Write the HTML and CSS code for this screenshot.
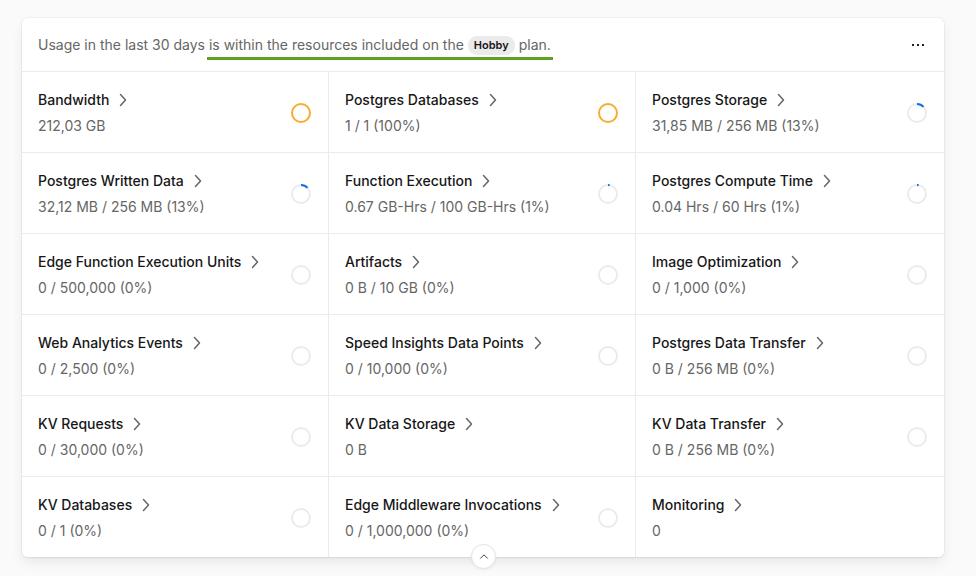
FILE: index.html
```html
<!DOCTYPE html>
<html>
<head>
<meta charset="utf-8">
<link rel="stylesheet" href="styles.css">
</head>
<body>
<div class="card">
  <div class="head">
    <p class="summary">Usage in the last 30 days <span class="hl">is within the resources included on the <span class="badge">Hobby</span> plan.</span></p>
    <svg class="more" viewBox="0 0 14 4"><rect x="1" y="1" width="2" height="2"/><rect x="6" y="1" width="2" height="2"/><rect x="11" y="1" width="2" height="2"/></svg>
  </div>
  <div class="grid">
    <div class="cell"><div class="info"><div class="title">Bandwidth <svg class="chev" viewBox="0 0 8 14"><path d="M1.5 1.5 6.5 7l-5 5.5"/></svg></div><div class="val">212,03 GB</div></div><svg class="ring" viewBox="0 0 22 22"><circle cx="11" cy="11" r="9" class="full"/></svg></div>
    <div class="cell"><div class="info"><div class="title">Postgres Databases <svg class="chev" viewBox="0 0 8 14"><path d="M1.5 1.5 6.5 7l-5 5.5"/></svg></div><div class="val">1 / 1 (100%)</div></div><svg class="ring" viewBox="0 0 22 22"><circle cx="11" cy="11" r="9" class="full"/></svg></div>
    <div class="cell"><div class="info"><div class="title">Postgres Storage <svg class="chev" viewBox="0 0 8 14"><path d="M1.5 1.5 6.5 7l-5 5.5"/></svg></div><div class="val">31,85 MB / 256 MB (13%)</div></div><svg class="ring" viewBox="0 0 22 22"><circle cx="11" cy="11" r="9" class="track"/><circle cx="11" cy="11" r="9" class="prog" pathLength="100" stroke-dasharray="13 100" transform="rotate(-90 11 11)"/></svg></div>

    <div class="cell"><div class="info"><div class="title">Postgres Written Data <svg class="chev" viewBox="0 0 8 14"><path d="M1.5 1.5 6.5 7l-5 5.5"/></svg></div><div class="val">32,12 MB / 256 MB (13%)</div></div><svg class="ring" viewBox="0 0 22 22"><circle cx="11" cy="11" r="9" class="track"/><circle cx="11" cy="11" r="9" class="prog" pathLength="100" stroke-dasharray="13 100" transform="rotate(-90 11 11)"/></svg></div>
    <div class="cell"><div class="info"><div class="title">Function Execution <svg class="chev" viewBox="0 0 8 14"><path d="M1.5 1.5 6.5 7l-5 5.5"/></svg></div><div class="val">0.67 GB-Hrs / 100 GB-Hrs (1%)</div></div><svg class="ring" viewBox="0 0 22 22"><circle cx="11" cy="11" r="9" class="track"/><circle cx="11" cy="11" r="9" class="prog" pathLength="100" stroke-dasharray="3 100" transform="rotate(-90 11 11)"/></svg></div>
    <div class="cell"><div class="info"><div class="title">Postgres Compute Time <svg class="chev" viewBox="0 0 8 14"><path d="M1.5 1.5 6.5 7l-5 5.5"/></svg></div><div class="val">0.04 Hrs / 60 Hrs (1%)</div></div><svg class="ring" viewBox="0 0 22 22"><circle cx="11" cy="11" r="9" class="track"/><circle cx="11" cy="11" r="9" class="prog" pathLength="100" stroke-dasharray="3 100" transform="rotate(-90 11 11)"/></svg></div>

    <div class="cell"><div class="info"><div class="title">Edge Function Execution Units <svg class="chev" viewBox="0 0 8 14"><path d="M1.5 1.5 6.5 7l-5 5.5"/></svg></div><div class="val">0 / 500,000 (0%)</div></div><svg class="ring" viewBox="0 0 22 22"><circle cx="11" cy="11" r="9" class="track"/></svg></div>
    <div class="cell"><div class="info"><div class="title">Artifacts <svg class="chev" viewBox="0 0 8 14"><path d="M1.5 1.5 6.5 7l-5 5.5"/></svg></div><div class="val">0 B / 10 GB (0%)</div></div><svg class="ring" viewBox="0 0 22 22"><circle cx="11" cy="11" r="9" class="track"/></svg></div>
    <div class="cell"><div class="info"><div class="title">Image Optimization <svg class="chev" viewBox="0 0 8 14"><path d="M1.5 1.5 6.5 7l-5 5.5"/></svg></div><div class="val">0 / 1,000 (0%)</div></div><svg class="ring" viewBox="0 0 22 22"><circle cx="11" cy="11" r="9" class="track"/></svg></div>

    <div class="cell"><div class="info"><div class="title">Web Analytics Events <svg class="chev" viewBox="0 0 8 14"><path d="M1.5 1.5 6.5 7l-5 5.5"/></svg></div><div class="val">0 / 2,500 (0%)</div></div><svg class="ring" viewBox="0 0 22 22"><circle cx="11" cy="11" r="9" class="track"/></svg></div>
    <div class="cell"><div class="info"><div class="title">Speed Insights Data Points <svg class="chev" viewBox="0 0 8 14"><path d="M1.5 1.5 6.5 7l-5 5.5"/></svg></div><div class="val">0 / 10,000 (0%)</div></div><svg class="ring" viewBox="0 0 22 22"><circle cx="11" cy="11" r="9" class="track"/></svg></div>
    <div class="cell"><div class="info"><div class="title">Postgres Data Transfer <svg class="chev" viewBox="0 0 8 14"><path d="M1.5 1.5 6.5 7l-5 5.5"/></svg></div><div class="val">0 B / 256 MB (0%)</div></div><svg class="ring" viewBox="0 0 22 22"><circle cx="11" cy="11" r="9" class="track"/></svg></div>

    <div class="cell"><div class="info"><div class="title">KV Requests <svg class="chev" viewBox="0 0 8 14"><path d="M1.5 1.5 6.5 7l-5 5.5"/></svg></div><div class="val">0 / 30,000 (0%)</div></div><svg class="ring" viewBox="0 0 22 22"><circle cx="11" cy="11" r="9" class="track"/></svg></div>
    <div class="cell"><div class="info"><div class="title">KV Data Storage <svg class="chev" viewBox="0 0 8 14"><path d="M1.5 1.5 6.5 7l-5 5.5"/></svg></div><div class="val">0 B</div></div></div>
    <div class="cell"><div class="info"><div class="title">KV Data Transfer <svg class="chev" viewBox="0 0 8 14"><path d="M1.5 1.5 6.5 7l-5 5.5"/></svg></div><div class="val">0 B / 256 MB (0%)</div></div><svg class="ring" viewBox="0 0 22 22"><circle cx="11" cy="11" r="9" class="track"/></svg></div>

    <div class="cell"><div class="info"><div class="title">KV Databases <svg class="chev" viewBox="0 0 8 14"><path d="M1.5 1.5 6.5 7l-5 5.5"/></svg></div><div class="val">0 / 1 (0%)</div></div><svg class="ring" viewBox="0 0 22 22"><circle cx="11" cy="11" r="9" class="track"/></svg></div>
    <div class="cell"><div class="info"><div class="title">Edge Middleware Invocations <svg class="chev" viewBox="0 0 8 14"><path d="M1.5 1.5 6.5 7l-5 5.5"/></svg></div><div class="val">0 / 1,000,000 (0%)</div></div><svg class="ring" viewBox="0 0 22 22"><circle cx="11" cy="11" r="9" class="track"/></svg></div>
    <div class="cell"><div class="info"><div class="title">Monitoring <svg class="chev" viewBox="0 0 8 14"><path d="M1.5 1.5 6.5 7l-5 5.5"/></svg></div><div class="val">0</div></div></div>
  </div>
  <div class="collapse"><svg viewBox="0 0 12 8"><path d="M1.5 6.5 6 2l4.5 4.5"/></svg></div>
</div>
</body>
</html>
```

FILE: styles.css
```css
* { box-sizing: border-box; }
html, body { margin: 0; background: #fafafa; }
body {
  padding: 18px 32px 0 22px;
  font-family: Inter, "Noto Sans", sans-serif;
  -webkit-font-smoothing: antialiased;
  min-height: 576px;
}
.card {
  position: relative;
  width: 922px;
  background: #fff;
  border-radius: 6px;
  box-shadow: 0 0 0 1px rgba(0,0,0,0.03), 0 1px 2px rgba(0,0,0,0.05), 0 6px 14px -2px rgba(0,0,0,0.09);
}
.head {
  height: 54px;
  display: flex;
  align-items: center;
  justify-content: space-between;
  padding: 0 16px;
  border-bottom: 1px solid #ebebeb;
}
.summary {
  margin: 0;
  font-size: 14px;
  color: #666;
  line-height: 20px;
}
.hl {
  border-bottom: 3px solid #5ea11f;
  padding: 0 2px 4px 2px;
  margin-left: -2px;
}
.badge {
  display: inline-block;
  background: #ebebeb;
  color: #171717;
  font-size: 11px;
  font-weight: 600;
  line-height: 19px;
  padding: 0 6px;
  border-radius: 9px;
  vertical-align: 1px;
}
.more {
  width: 14px;
  height: 4px;
  margin-right: 3px;
  fill: #222;
}
.grid {
  display: grid;
  grid-template-columns: 306px 306px 308px;
  gap: 1px;
  background: #ebebeb;
  border-radius: 0 0 6px 6px;
  overflow: hidden;
}
.cell {
  background: #fff;
  height: 80px;
  display: flex;
  align-items: center;
  justify-content: space-between;
  padding: 1px 16px 0 16px;
}
.info {
  display: flex;
  flex-direction: column;
  gap: 6px;
}
.title {
  display: flex;
  align-items: center;
  font-size: 14px;
  font-weight: 500;
  color: #171717;
  line-height: 20px;
}
.chev {
  width: 8px;
  height: 14px;
  margin-left: 10px;
  fill: none;
  stroke: #666;
  stroke-width: 1.5;
  stroke-linecap: round;
  stroke-linejoin: round;
}
.val {
  font-size: 14px;
  color: #666;
  line-height: 20px;
}
.ring {
  width: 22px;
  height: 22px;
  fill: none;
  stroke-width: 2;
}
.ring .full { stroke: #f5ad2a; }
.ring .track { stroke: #ebebeb; }
.ring .prog { stroke: #0a72ef; }
.collapse {
  position: absolute;
  z-index: 2;
  left: 449px;
  top: 526px;
  width: 25px;
  height: 25px;
  border-radius: 50%;
  border: 1px solid #e3e3e3;
  background: #fff;
  display: flex;
  align-items: center;
  justify-content: center;
  box-shadow: 0 1px 3px rgba(0,0,0,0.06);
}
.collapse svg {
  width: 10px;
  height: 7px;
  fill: none;
  stroke: #333;
  stroke-width: 1.1;
}
```
